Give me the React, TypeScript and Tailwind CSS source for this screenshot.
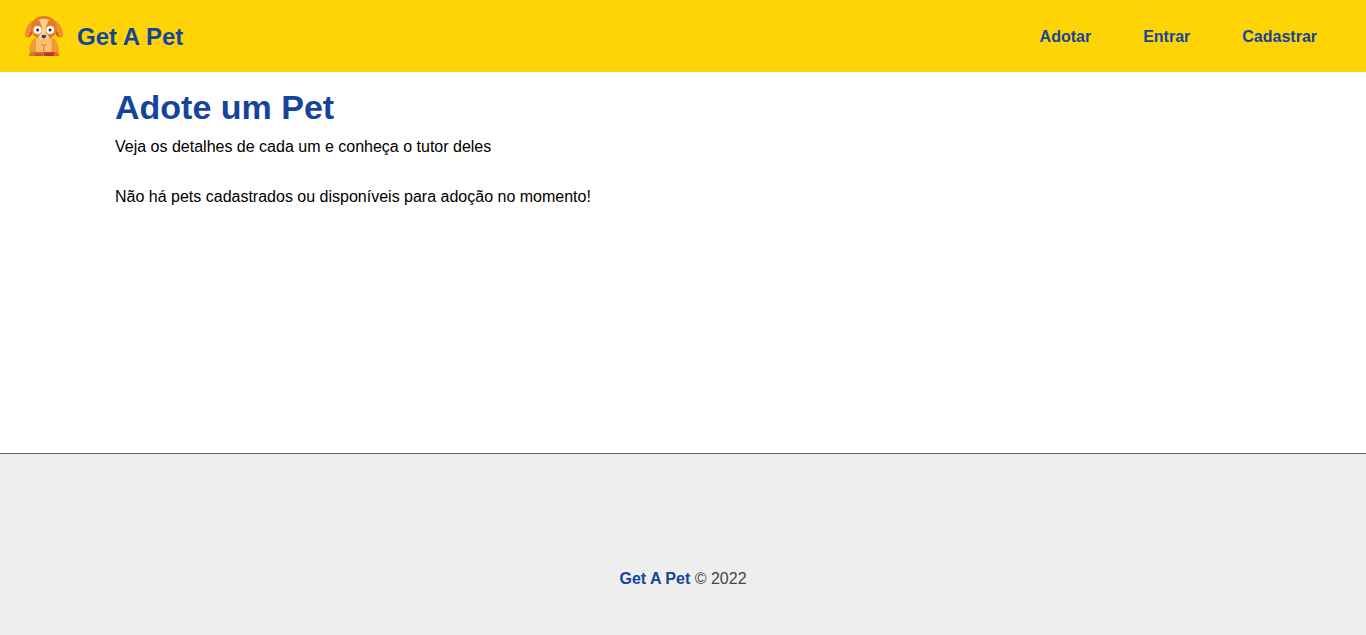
function DogLogo() {
  return (
    <svg viewBox="0 0 40 40" className="h-10 w-10 shrink-0" role="img" aria-label="Get A Pet">
      {/* body */}
      <path d="M11 22C8.500 24 6 27.500 5.300 32c-.2 2 0 3.500.7 5h28c.8-1.500 1-3 .7-5-.6-4.500-3.200-8-5.700-10z" fill="#ef9a34" />
      <path d="M5 40c0-2.500 1-4 3-4h3.500v4z" fill="#e06f2b" />
      <path d="M28 36h4c2 0 3 1.500 3 4h-7z" fill="#e9692c" />
      {/* chest and front legs */}
      <path d="M12 20h15.500v16.200H12z" fill="#fac06e" />
      <path d="M16.800 28.200l2.900 1.400 2.900-1.400M19.700 29.500V36" fill="none" stroke="#d9762c" strokeWidth="0.9" />
      <path d="M11 36.200h8.700V40H11z" fill="#d4602b" />
      <path d="M19.700 36.200H30V40H19.700z" fill="#c2352a" />
      <path d="M13 38v2M16 38v2M23 38v2M26 38v2" stroke="#a92d20" strokeWidth="0.7" />
      {/* ears */}
      <path d="M9 4C4 7.500 1 13.500 1 19c0 2 1.200 3.200 2.700 2.500C6.500 20 8 17.500 8.500 14z" fill="#f0912f" />
      <path d="M31 4C36 7.500 39 13.500 39 19c0 2-1.200 3.200-2.700 2.500C33.500 20 32 17.500 31.500 14z" fill="#f0912f" />
      <path d="M7.200 14.500L4 21.500c2.200-.6 4-2.500 4.300-4.700zM32.500 14.500l3.300 7c-2.200-.6-4-2.500-4.300-4.700z" fill="#e83f32" />
      {/* head */}
      <path d="M20 0C10.500 0 7 6 7 13c0 6 5 10 13 10s13-4 13-10C33 6 29.500 0 20 0z" fill="#e57d26" />
      {/* blaze and muzzle */}
      <path d="M15 3.400c3.200-1 6.800-1 10 0l-3.400 8.100.3 5.500c2.200 1.500 3.600 3.300 3.100 5.600-3.300 1-7.300 1-10.600 0-.5-2.300.9-4.100 3.200-5.600l.5-5.500z" fill="#fdd196" />
      {/* eyes */}
      <circle cx="13.500" cy="14" r="4" fill="#fff" />
      <circle cx="26.200" cy="14" r="4" fill="#fff" />
      <circle cx="13.700" cy="14" r="1.500" fill="#202b39" />
      <circle cx="26" cy="14" r="1.500" fill="#202b39" />
      {/* nose */}
      <path d="M17.700 19.300c1.200-.8 3.200-.8 4.400 0 .3 1.500-.8 3.200-2.200 3.200s-2.500-1.700-2.200-3.200z" fill="#29486b" />
    </svg>
  );
}

const links = [
  { label: "Adotar", href: "#adotar" },
  { label: "Entrar", href: "#entrar" },
  { label: "Cadastrar", href: "#cadastrar" },
];

export default function App() {
  return (
    <div className="flex min-h-screen flex-col bg-white font-['Liberation_Sans',Arial,sans-serif] text-base text-black">
      <header className="flex items-center justify-between bg-[#ffd404] py-4 pr-[49px] pl-6">
        <div className="flex items-center gap-[13px]">
          <DogLogo />
          <h2 className="pt-0.5 text-2xl font-bold text-[#15459b]">Get A Pet</h2>
        </div>
        <nav className="pt-0.5">
          <ul className="flex items-center gap-[52px]">
            {links.map(({ label, href }) => (
              <li key={href}>
                <a href={href} className="font-bold text-[#15459b]">
                  {label}
                </a>
              </li>
            ))}
          </ul>
        </nav>
      </header>
      <main className="mx-auto w-full max-w-[1136px] grow py-4">
        <h1 className="text-[34px] leading-[38px] font-bold text-[#15459b]">Adote um Pet</h1>
        <p className="mt-[9px]">Veja os detalhes de cada um e conheça o tutor deles</p>
        <p className="mt-[26px]">Não há pets cadastrados ou disponíveis para adoção no momento!</p>
      </main>
      <footer className="border-t border-[#666] bg-[#eee] pt-[113px] pb-11 text-center text-[#444]">
        <p>
          <span className="font-bold text-[#15459b]">Get A Pet</span> © 2022
        </p>
      </footer>
    </div>
  );
}
